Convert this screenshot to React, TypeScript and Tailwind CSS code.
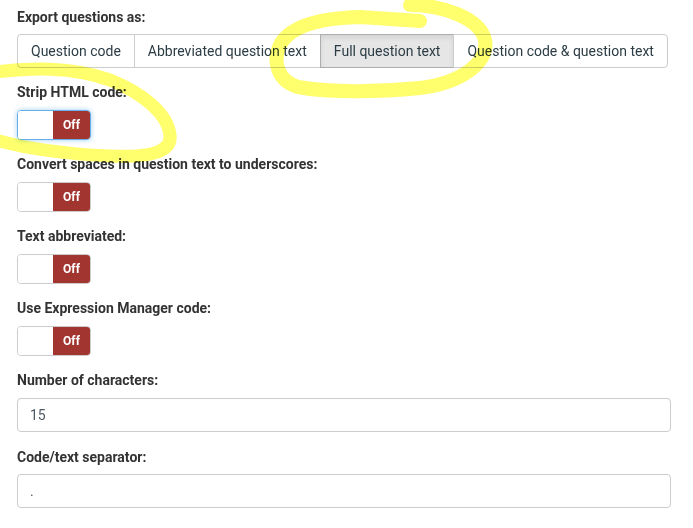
// ExportOptions.tsx
const exportModes = [
  'Question code',
  'Abbreviated question text',
  'Full question text',
  'Question code & question text',
];

const switches = [
  { label: 'Strip HTML code:', focused: true },
  { label: 'Convert spaces in question text to underscores:', focused: false },
  { label: 'Text abbreviated:', focused: false },
  { label: 'Use Expression Manager code:', focused: false },
];

const OffToggle = ({ focused }: { focused: boolean }) => {
  return (
    <div
      className={
        focused
          ? 'flex w-[74px] h-[30px] rounded overflow-hidden border border-[#66afe9] shadow-[0_0_5px_rgba(102,175,233,0.6)]'
          : 'flex w-[74px] h-[30px] rounded overflow-hidden border border-[#ccc]'
      }
    >
      <div className="flex-1 bg-white"></div>
      <div className="w-[37px] bg-[#a2352f] text-white text-[12px] font-bold flex items-center justify-center">
        Off
      </div>
    </div>
  );
};

const App: React.FC = () => {
  return (
    <div className="relative w-[693px] h-[528px] bg-white overflow-hidden font-['Roboto','Liberation_Sans',sans-serif]">
      <div className="pl-[17px] pr-[22px] pt-[7px]">
        <div className="text-[14px] leading-5 font-bold text-[#333] mb-[7px]">Export questions as:</div>
        <div className="inline-flex mb-[14px]">
          {exportModes.map((mode, index) => (
            <div
              key={index}
              className={
                mode === 'Full question text'
                  ? 'h-[34px] px-[13px] flex items-center text-[14px] text-[#2b3c45] bg-[#e6e6e6] border border-[#adadad] shadow-[inset_0_3px_5px_rgba(0,0,0,0.08)] -ml-px'
                  : index === 0
                  ? 'h-[34px] px-[13px] flex items-center text-[14px] text-[#2b3c45] bg-white border border-[#ccc] rounded-l'
                  : index === exportModes.length - 1
                  ? 'h-[34px] px-[13px] flex items-center text-[14px] text-[#2b3c45] bg-white border border-[#ccc] rounded-r -ml-px'
                  : 'h-[34px] px-[13px] flex items-center text-[14px] text-[#2b3c45] bg-white border border-[#ccc] -ml-px'
              }
            >
              {mode}
            </div>
          ))}
        </div>

        {switches.map((item, index) => (
          <div key={index} className="mb-[14px]">
            <div className="text-[14px] leading-5 font-bold text-[#333] mb-2">{item.label}</div>
            <OffToggle focused={item.focused} />
          </div>
        ))}

        <div className="mb-[15px]">
          <div className="text-[14px] leading-5 font-bold text-[#333] mb-2">Number of characters:</div>
          <div className="h-[34px] w-full border border-[#ccc] rounded px-3 flex items-center text-[14px] text-[#4d5a66]">
            15
          </div>
        </div>
        <div>
          <div className="text-[14px] leading-5 font-bold text-[#333] mb-[7px]">Code/text separator:</div>
          <div className="h-[34px] w-full border border-[#ccc] rounded px-3 flex items-center text-[14px] text-[#4d5a66]">
            .
          </div>
        </div>
      </div>

      {/* highlighter marks drawn on top */}
      <svg
        className="absolute inset-0 pointer-events-none mix-blend-multiply"
        width="693"
        height="528"
        viewBox="0 0 693 528"
      >
        <path
          d="M 410 5 C 442 5, 480 18, 485 40 C 489 62, 462 83, 420 88 C 380 92, 330 93, 298 87 C 278 81, 272 62, 280 45 C 290 26, 320 18, 360 17 L 420 21"
          fill="none"
          stroke="#ffff6e"
          strokeWidth="14"
          strokeLinecap="round"
          strokeLinejoin="round"
        />
        <path
          d="M -4 72 C 30 68, 70 66, 110 80 C 145 94, 168 115, 170 135 C 172 152, 150 158, 110 156 C 70 154, 30 150, -4 140"
          fill="none"
          stroke="#ffff6e"
          strokeWidth="13"
          strokeLinecap="round"
          strokeLinejoin="round"
        />
      </svg>
    </div>
  );
};

export default App;
